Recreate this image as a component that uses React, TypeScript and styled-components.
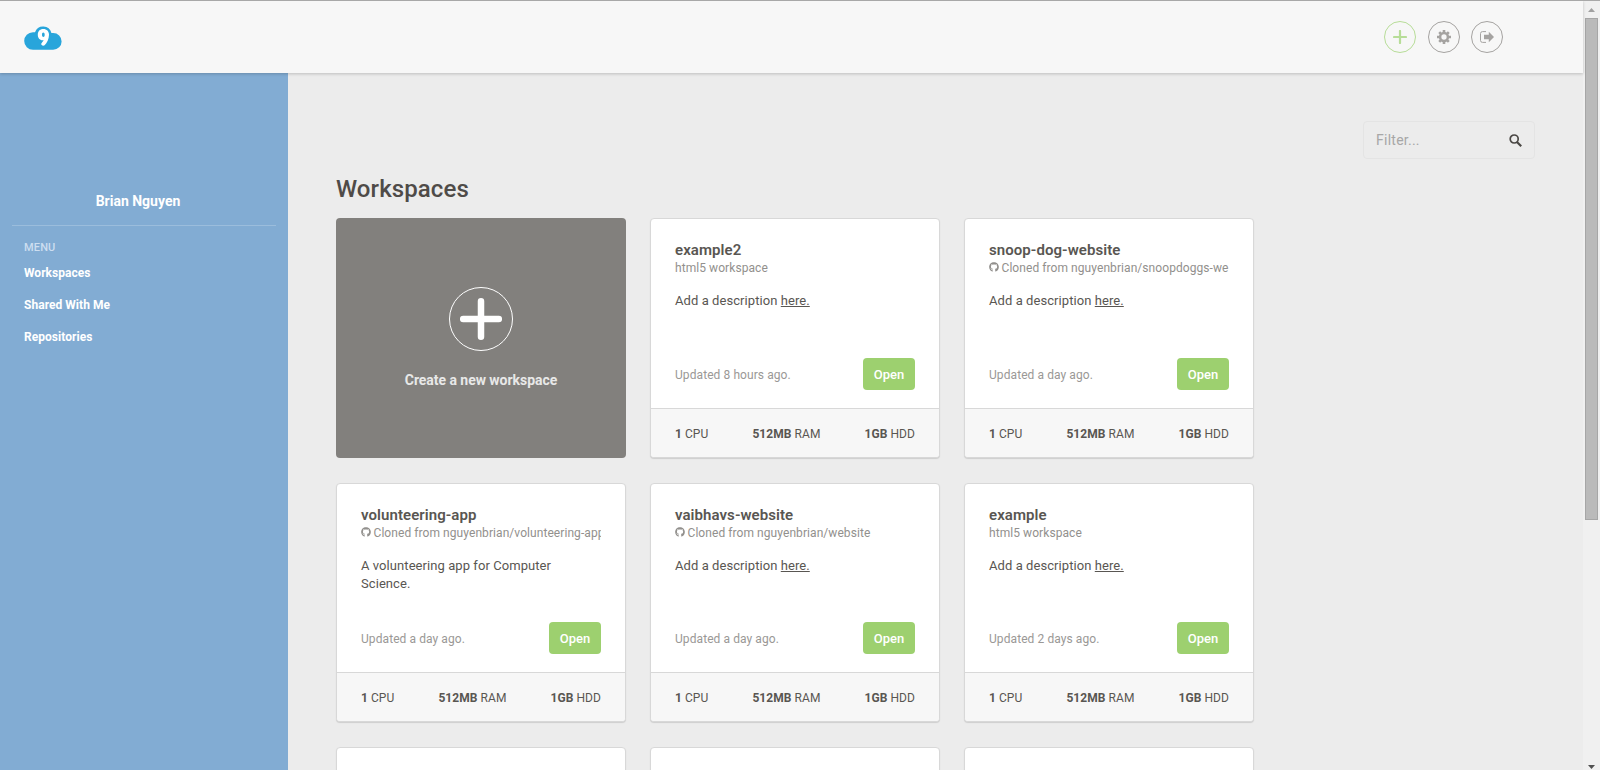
import React from "react";
import styled, { createGlobalStyle } from "styled-components";
import { FaGithub } from "react-icons/fa";

const GlobalStyle = createGlobalStyle`
  *, *::before, *::after { box-sizing: border-box; }
  body { margin: 0; overflow: hidden; background: #ececec; }
  body, button, input { font-family: Roboto, "Liberation Sans", sans-serif; }
`;

const Window = styled.div`
  display: flex;
  height: 770px;
  border-top: 1px solid #a8a8a8;
  overflow: hidden;
  color: #595652;
`;

const Page = styled.div`
  flex: 1;
  min-width: 0;
  display: flex;
  flex-direction: column;
`;

const Header = styled.header`
  position: relative;
  z-index: 1;
  flex: none;
  display: flex;
  justify-content: space-between;
  height: 72px;
  padding: 20px 80px 0 24px;
  background: #f7f7f7;
  box-shadow: 0 1px 3px rgba(0, 0, 0, 0.2);
`;

const Logo = styled.svg`
  display: block;
  margin-top: 4px;
`;

const Actions = styled.div`
  display: flex;
  gap: 11.5px;
`;

const RoundButton = styled.button<{ $tone: string }>`
  display: flex;
  align-items: center;
  justify-content: center;
  width: 32px;
  height: 32px;
  padding: 0;
  border: 1px solid ${(p) => p.$tone};
  border-radius: 50%;
  background: none;
  color: ${(p) => p.$tone};
`;

const Columns = styled.div`
  flex: 1;
  min-height: 0;
  display: flex;
`;

const Sidebar = styled.aside`
  flex: none;
  width: 288px;
  padding: 118px 12px 0;
  background: #82acd3;
  color: #fff;
`;

const UserName = styled.div`
  padding-bottom: 14px;
  border-bottom: 1px solid #9bbddc;
  font-size: 14px;
  line-height: 20px;
  font-weight: 700;
  text-align: center;
  text-indent: -12px;
`;

const MenuLabel = styled.div`
  margin: 14px 12px 0;
  font-size: 11px;
  line-height: 16px;
  font-weight: 500;
  letter-spacing: 0.15px;
  color: #cddef0;
`;

const MenuItem = styled.a`
  display: block;
  margin: 0 12px;
  font-size: 12px;
  line-height: 32px;
  font-weight: 700;
  letter-spacing: 0.04px;
`;

const Menu = styled.nav`
  margin-top: 1px;
`;

const Main = styled.main`
  flex: 1;
  padding: 48px 48px 0;
`;

const FilterRow = styled.div`
  display: flex;
  justify-content: flex-end;
`;

const FilterBox = styled.label`
  display: flex;
  align-items: center;
  width: 172px;
  height: 38px;
  padding: 0 12px;
  border: 1px solid #e4e4e4;
  border-radius: 4px;
`;

const FilterInput = styled.input`
  flex: 1;
  min-width: 0;
  padding: 0;
  border: 0;
  outline: 0;
  background: none;
  font-size: 14px;
  letter-spacing: 0.25px;
  &::placeholder { color: #a7a7a7; opacity: 1; }
`;

const Heading = styled.h1`
  margin: 15px 0 14px;
  font-size: 24px;
  line-height: 30px;
  font-weight: 500;
  letter-spacing: 0.1px;
  color: #4f4b48;
`;

const Grid = styled.div`
  display: grid;
  grid-template-columns: repeat(3, 290px);
  grid-auto-rows: 239.75px;
  gap: 24.75px 24px;
`;

const CreateCard = styled.div`
  display: flex;
  flex-direction: column;
  align-items: center;
  padding-top: 69px;
  border-radius: 4px;
  background: #82807d;
  color: #e8e8e8;
  font-size: 14px;
  line-height: 20px;
  font-weight: 700;
  letter-spacing: -0.04px;
`;

const CreateIcon = styled.svg`
  display: block;
  margin-bottom: 19px;
`;

const Card = styled.article`
  display: flex;
  flex-direction: column;
  border: 1px solid #d8d8d8;
  border-radius: 4px;
  background: #fff;
  box-shadow: 0 1px 1px rgba(0, 0, 0, 0.13);
  overflow: hidden;
`;

const CardBody = styled.div`
  flex: 1;
  display: flex;
  flex-direction: column;
  padding: 22px 24px 18px;
`;

const CardTitle = styled.h2`
  margin: 0;
  font-size: 15px;
  line-height: 18px;
  font-weight: 600;
  letter-spacing: 0.07px;
`;

const Source = styled.div`
  display: flex;
  align-items: center;
  gap: 2.5px;
  font-size: 12px;
  line-height: 18px;
  letter-spacing: 0.07px;
  color: #92908d;
  white-space: nowrap;
  overflow: hidden;
  svg { flex: none; margin-top: -2px; }
`;

const Description = styled.p`
  margin: 15px 0 0;
  font-size: 13px;
  line-height: 18px;
  letter-spacing: 0.07px;
`;

const Underlined = styled.a`
  text-decoration: underline;
`;

const UpdateRow = styled.div`
  display: flex;
  align-items: center;
  justify-content: space-between;
  margin-top: auto;
  font-size: 12px;
  color: #9a9896;
`;

const Updated = styled.span`
  padding-top: 1.5px;
  letter-spacing: 0.08px;
`;

const OpenButton = styled.button`
  width: 52px;
  height: 32px;
  padding: 0.6px 0 0;
  border: 0;
  border-radius: 4px;
  background: #9dd06f;
  color: #fff;
  font-size: 13px;
  font-weight: 500;
`;

const Specs = styled.footer`
  display: flex;
  align-items: center;
  justify-content: space-between;
  height: 49px;
  padding: 1.5px 24px 0;
  border-top: 1px solid #d8d8d8;
  background: #f7f7f7;
  font-size: 12px;
  letter-spacing: 0.06px;
`;

const Amount = styled.b`
  font-weight: 700;
`;

const Scrollbar = styled.div`
  flex: none;
  display: flex;
  flex-direction: column;
  align-items: center;
  width: 17px;
  height: 769px;
  background: #f0f0f0;
`;

const Arrow = styled.svg`
  display: block;
  flex: none;
`;

const Thumb = styled.div`
  width: 13px;
  height: 502px;
  border: 1px solid #a6a6a6;
  background: #bababa;
`;

const Track = styled.div`
  flex: 1;
`;

type Workspace = { name: string; source: string; cloned?: boolean; description?: string; updated: string };

const workspaces: Workspace[] = [
  { name: "example2", source: "html5 workspace", updated: "8 hours ago" },
  { name: "snoop-dog-website", source: "nguyenbrian/snoopdoggs-we", cloned: true, updated: "a day ago" },
  { name: "volunteering-app", source: "nguyenbrian/volunteering-app", cloned: true, description: "A volunteering app for Computer Science.", updated: "a day ago" },
  { name: "vaibhavs-website", source: "nguyenbrian/website", cloned: true, updated: "a day ago" },
  { name: "example", source: "html5 workspace", updated: "2 days ago" },
];

function WorkspaceCard({ item }: { item: Workspace }) {
  return (
    <Card>
      <CardBody>
        <CardTitle>{item.name}</CardTitle>
        <Source>
          {item.cloned && <FaGithub size={10} />}
          <span>{item.cloned ? `Cloned from ${item.source}` : item.source}</span>
        </Source>
        <Description>
          {item.description ?? <>Add a description <Underlined>here.</Underlined></>}
        </Description>
        <UpdateRow>
          <Updated>Updated {item.updated}.</Updated>
          <OpenButton>Open</OpenButton>
        </UpdateRow>
      </CardBody>
      <Specs>
        <span><Amount>1</Amount> CPU</span>
        <span><Amount>512MB</Amount> RAM</span>
        <span><Amount>1GB</Amount> HDD</span>
      </Specs>
    </Card>
  );
}

export default function App() {
  return (
    <>
      <GlobalStyle />
      <Window>
        <Page>
          <Header>
            <Logo width="38" height="25" viewBox="0 0 38 25">
              <path fill="#28a5db" d="M9 24.800A8.800 8.800 0 0 1 9 7.200h2a8.600 8.600 0 0 1 16.400.8h1.800a8.400 8.400 0 0 1 0 16.800z" />
              <path fill="#fff" fillRule="evenodd" d="M19.300 3.900C22.800 3.900 25 6.200 25 9.800C25 14 23 18 20.600 20.300C19.300 21.400 16.800 20.400 17.300 18.600L19.700 15.200C16 15.800 13.800 13.300 13.800 9.800C13.800 6.200 15.800 3.900 19.300 3.900zM19.300 7.600c-.8 0-1.300.9-1.300 2.200s.5 2.200 1.300 2.200 1.400-.8 1.400-2.200-.6-2.200-1.400-2.200z" />
            </Logo>
            <Actions>
              <RoundButton $tone="#b7dd98" aria-label="New">
                <svg width="14" height="14" viewBox="0 0 14 14"><path stroke="currentColor" strokeWidth="2.200" strokeLinecap="round" d="M7 1v12M1 7h12" /></svg>
              </RoundButton>
              <RoundButton $tone="#a5a3a1" aria-label="Settings">
                <svg width="14" height="14" viewBox="0 0 14 14">
                  <path stroke="currentColor" strokeWidth="2.600" d="M7 0v14M0 7h14M2.200 2.200l9.600 9.600M2.200 11.800l9.600-9.600" />
                  <circle cx="7" cy="7" r="3.900" fill="#f7f7f7" stroke="currentColor" strokeWidth="2.500" />
                </svg>
              </RoundButton>
              <RoundButton $tone="#a5a3a1" aria-label="Sign out">
                <svg width="14" height="12" viewBox="0 0 14 12">
                  <path fill="none" stroke="currentColor" d="M6 .6H2.500a2 2 0 0 0-2 2v6.800a2 2 0 0 0 2 2H6" />
                  <path fill="currentColor" d="M4 3.700h4.800V.7L14 6 8.800 11.300v-3H4z" />
                </svg>
              </RoundButton>
            </Actions>
          </Header>
          <Columns>
            <Sidebar>
              <UserName>Brian Nguyen</UserName>
              <MenuLabel>MENU</MenuLabel>
              <Menu>
                <MenuItem>Workspaces</MenuItem>
                <MenuItem>Shared With Me</MenuItem>
                <MenuItem>Repositories</MenuItem>
              </Menu>
            </Sidebar>
            <Main>
              <FilterRow>
                <FilterBox>
                  <FilterInput placeholder="Filter..." />
                  <svg width="13" height="13" viewBox="0 0 13 13"><circle cx="5.200" cy="5" r="4" fill="none" stroke="#4a4744" strokeWidth="1.700" /><path stroke="#4a4744" strokeWidth="2.200" d="M8 8l4.200 4.200" /></svg>
                </FilterBox>
              </FilterRow>
              <Heading>Workspaces</Heading>
              <Grid>
                <CreateCard>
                  <CreateIcon width="64" height="64" viewBox="0 0 64 64">
                    <circle cx="32" cy="32" r="31.500" fill="none" stroke="#fff" />
                    <path stroke="#fff" strokeWidth="6.500" strokeLinecap="round" d="M32 14.200v35.600M14.200 32h35.600" />
                  </CreateIcon>
                  Create a new workspace
                </CreateCard>
                {workspaces.map((item) => <WorkspaceCard key={item.name} item={item} />)}
                <Card />
                <Card />
                <Card />
              </Grid>
            </Main>
          </Columns>
        </Page>
        <Scrollbar>
          <Arrow width="17" height="17" viewBox="0 0 17 17"><path fill="#a0a0a0" d="M5 11l3.500-4 3.500 4z" /></Arrow>
          <Thumb />
          <Track />
          <Arrow width="17" height="10" viewBox="0 0 17 10"><path fill="#505050" d="M5 5h7L8.500 9z" /></Arrow>
        </Scrollbar>
      </Window>
    </>
  );
}
